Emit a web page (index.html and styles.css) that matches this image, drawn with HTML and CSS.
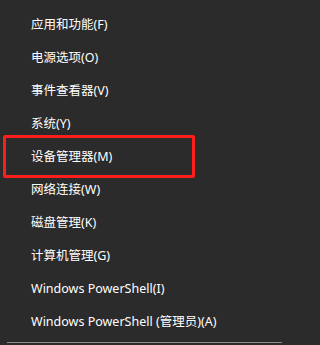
FILE: index.html
```html
<!DOCTYPE html>
<html lang="zh-CN">
<head>
<meta charset="utf-8">
<link rel="stylesheet" href="styles.css">
</head>
<body>
<div class="menu">
  <ul class="list">
    <li class="item">应用和功能(F)</li>
    <li class="item">电源选项(O)</li>
    <li class="item">事件查看器(V)</li>
    <li class="item">系统(Y)</li>
    <li class="item item-marked">设备管理器(M)<span class="mark"></span></li>
    <li class="item">网络连接(W)</li>
    <li class="item">磁盘管理(K)</li>
    <li class="item">计算机管理(G)</li>
    <li class="item">Windows PowerShell(I)</li>
    <li class="item">Windows PowerShell (管理员)(A)</li>
  </ul>
  <div class="separator"></div>
</div>
</body>
</html>
```
FILE: styles.css
```css
html, body {
  margin: 0;
  padding: 0;
  background: #2b2b2b;
}
body {
  height: 345px;
  overflow: hidden;
  font-family: "Noto Sans", "Noto Sans CJK SC", sans-serif;
  font-size: 12.5px;
  color: #ffffff;
}
.menu {
  width: 284px;
  padding-top: 8px;
}
.list {
  list-style: none;
  margin: 0;
  padding: 0;
}
.item {
  height: 33px;
  line-height: 33px;
  padding-left: 31px;
  white-space: nowrap;
}
.item-marked {
  position: relative;
}
.mark {
  position: absolute;
  left: 3px;
  top: -5px;
  width: 186px;
  height: 37px;
  border: 3px solid #fc1d1d;
  border-radius: 2px;
}
.separator {
  margin: 4px 2px 0 7px;
  height: 1px;
  background: #8c8c8c;
}
```
